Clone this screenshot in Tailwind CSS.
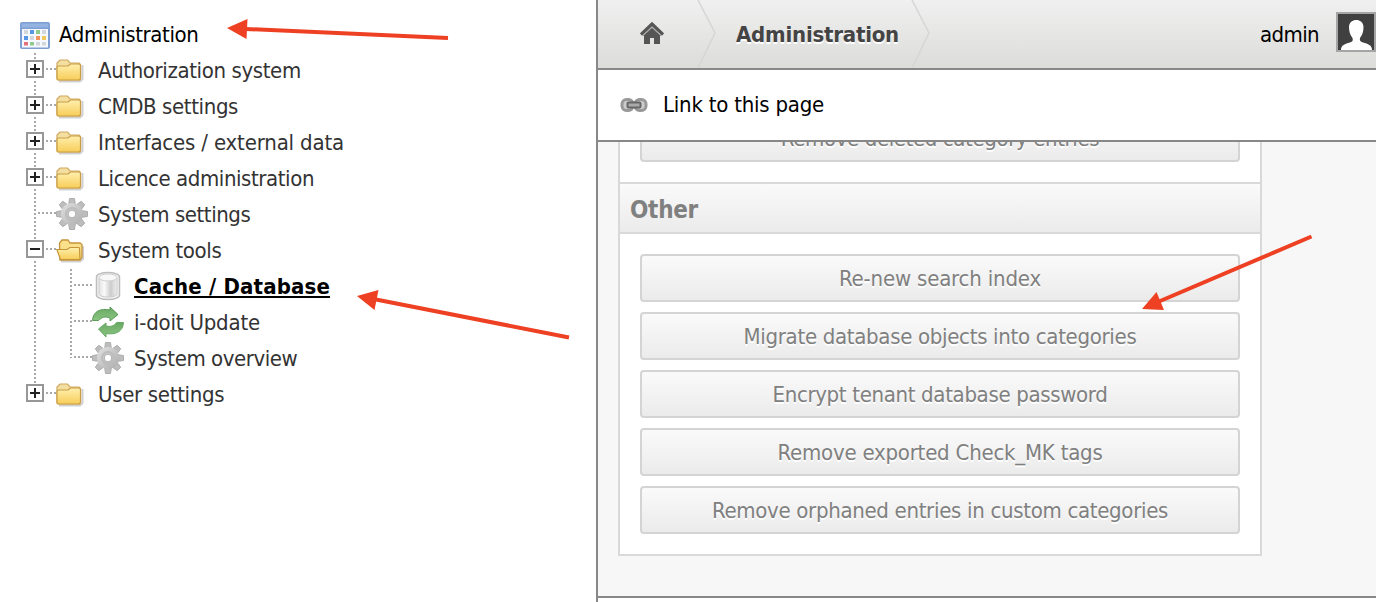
<!DOCTYPE html>
<html lang="en">
<head>
<meta charset="utf-8">
<title>Administration</title>
<script src="https://cdn.jsdelivr.net/npm/@tailwindcss/browser@4"></script>
</head>
<body class="relative flex h-[602px] w-[1376px] overflow-hidden bg-white font-['DejaVu_Sans_Condensed','DejaVu_Sans',sans-serif] text-[22px] leading-[38px] tracking-[-0.38px] whitespace-nowrap text-[#333]">

<svg class="absolute h-0 w-0">
  <defs>
    <linearGradient id="gold" x1="0" y1="0" x2="0" y2="1"><stop offset="0" stop-color="#fff0ae"/><stop offset="1" stop-color="#f7cd58"/></linearGradient>
    <linearGradient id="silver" x1="0" y1="0" x2="1" y2="1"><stop offset="0" stop-color="#e2e2e2"/><stop offset="1" stop-color="#acacac"/></linearGradient>
    <linearGradient id="drum" x1="0" y1="0" x2="1" y2="0"><stop offset="0" stop-color="#e2e2e2"/><stop offset=".3" stop-color="#fafafa"/><stop offset=".65" stop-color="#cccccc"/><stop offset="1" stop-color="#eeeeee"/></linearGradient>
    <linearGradient id="green" x1="0" y1="0" x2="0" y2="1"><stop offset="0" stop-color="#68a863"/><stop offset="1" stop-color="#8cc683"/></linearGradient>
    <symbol id="trunk" viewBox="0 0 38 36"><path d="M17 1V36" stroke="#a9a9a9" stroke-width="2" stroke-dasharray="2 2"/></symbol>
    <symbol id="box" viewBox="0 0 38 36">
      <path d="M28 17H38" stroke="#a9a9a9" stroke-width="2" stroke-dasharray="2 2"/>
      <rect x="7" y="7" width="20" height="21" fill="#fff"/>
      <rect x="9" y="9" width="16" height="16" fill="#fff" stroke="#979797" stroke-width="2"/>
      <path d="M12 17H22" stroke="#222" stroke-width="2"/>
    </symbol>
    <symbol id="plus" viewBox="0 0 38 36"><use href="#trunk"/><use href="#box"/><path d="M17 12V22" stroke="#222" stroke-width="2"/></symbol>
    <symbol id="plus-last" viewBox="0 0 38 36"><path d="M17 1V8" stroke="#a9a9a9" stroke-width="2" stroke-dasharray="2 2"/><use href="#box"/><path d="M17 12V22" stroke="#222" stroke-width="2"/></symbol>
    <symbol id="minus" viewBox="0 0 38 36"><use href="#trunk"/><use href="#box"/></symbol>
    <symbol id="leaf" viewBox="0 0 38 36"><use href="#trunk"/><path d="M20 17H38" stroke="#a9a9a9" stroke-width="2" stroke-dasharray="2 2"/></symbol>
    <symbol id="leaf-last" viewBox="0 0 38 36"><path d="M17 1V18M20 17H38" stroke="#a9a9a9" stroke-width="2" stroke-dasharray="2 2"/></symbol>
    <symbol id="folder" viewBox="0 0 32 36">
      <path d="M3 29.500H24L26.500 27V13" fill="none" stroke="#777" stroke-opacity=".35" stroke-width="2"/>
      <path d="M1 27V11L4 8H11.500L14 11H23L24.500 12.500V26L23 28H2Z" fill="#f3dfa0" stroke="#cfa862" stroke-width="1.200"/>
      <path d="M1 15.500Q1 14 2.500 14H12L14.500 12H22.500Q24.500 12 24.500 13.500V26Q24.500 28 22.500 28H2.500Q1 28 1 26Z" fill="url(#gold)" stroke="#c89d45" stroke-width="1.200"/>
    </symbol>
    <symbol id="folder-open" viewBox="0 0 32 36">
      <path d="M5 29.500H24L27 27V14" fill="none" stroke="#777" stroke-opacity=".35" stroke-width="2"/>
      <path d="M4 27L3.500 11L6 8H12L14 11H24L26 12.500V25L24 28H4Z" fill="#fbe08c" stroke="#c5943a" stroke-width="1.300"/>
      <path d="M.8 17.500H11L14 15.500H23L23.500 16.500L24 27.500H4.500Z" fill="url(#gold)" stroke="#c5943a" stroke-width="1.200"/>
    </symbol>
    <symbol id="gear" viewBox="0 0 32 36">
      <g transform="translate(16 18)">
        <g fill="#bdbdbd" stroke="#a3a3a3" stroke-width=".8">
          <path id="tooth" d="M-3.500 -9L-2.500 -15.500H2.500L3.500 -9ZM-3.500 9L-2.500 15.500H2.500L3.500 9Z"/>
          <use href="#tooth" transform="rotate(45)"/><use href="#tooth" transform="rotate(90)"/><use href="#tooth" transform="rotate(135)"/>
        </g>
        <circle r="11" fill="url(#silver)"/>
        <circle r="6" fill="none" stroke="#bcbcbc" stroke-width="2"/>
        <circle r="3.800" fill="#fff" stroke="#b0b0b0" stroke-width="1"/>
      </g>
    </symbol>
    <symbol id="database" viewBox="0 0 32 36">
      <path d="M4.500 9C4.500 3 27.500 3 27.500 9V27C27.500 33 4.500 33 4.500 27Z" fill="#f3f3f3" stroke="#bdbdbd" stroke-width="1.500"/>
      <path d="M7 10V26C7 30 25 30 25 26V10Z" fill="url(#drum)" stroke="#cdcdcd"/>
      <ellipse cx="16" cy="9.500" rx="9" ry="3.500" fill="#f8f8f8" stroke="#cfcfcf"/>
    </symbol>
    <symbol id="refresh" viewBox="0 0 32 36">
      <path d="M.5 16.500C1 7 9 4 18 6V3L26 10.500L18 17V14C13 12 10 13 6.500 16.500Z" fill="url(#green)" stroke="#589a56" stroke-width="1"/>
      <path d="M31.500 18.500C31 28 23 31 14 29.500V33L6.500 25L14 19V22C19 23 22 22 24.500 18.500Z" fill="url(#green)" stroke="#68a965" stroke-width="1"/>
    </symbol>
  </defs>
</svg>

<nav class="flex w-[596px] flex-col pt-4 pl-[18px]">
  <div class="flex h-9 text-black">
    <svg class="mr-[9px] h-9 w-8" viewBox="0 0 32 36">
      <rect x="2" y="6" width="30" height="27" rx="2" fill="#7f9fd2"/>
      <rect x="3.500" y="7.500" width="27" height="4" rx="1" fill="#94b2e2"/>
      <rect x="4" y="13" width="26" height="18.500" fill="#f5f9ff"/>
      <path d="M6 14h4v4h-4zM24 14h4v4h-4zM18 26h4v3.500h-4zM24 26h4v3.500h-4zM12 20h4v4h-4z" fill="#d3d6da"/>
      <path d="M12 14h4v4h-4zM6 20h4v4h-4z" fill="#5795e5"/>
      <path d="M18 14h4v4h-4zM12 26h4v3.500h-4z" fill="#8fca8c"/>
      <path d="M18 20h4v4h-4z" fill="#f2935c"/>
      <path d="M24 20h4v4h-4z" fill="#f0c95c"/>
      <path d="M6 26h4v3.500h-4z" fill="#e2717a"/>
    </svg>
    <span>Administration</span>
  </div>
  <div class="flex h-9"><svg class="h-9 w-[38px]"><use href="#plus"/></svg><svg class="mr-2.5 h-9 w-8"><use href="#folder"/></svg><span>Authorization system</span></div>
  <div class="flex h-9"><svg class="h-9 w-[38px]"><use href="#plus"/></svg><svg class="mr-2.5 h-9 w-8"><use href="#folder"/></svg><span>CMDB settings</span></div>
  <div class="flex h-9"><svg class="h-9 w-[38px]"><use href="#plus"/></svg><svg class="mr-2.5 h-9 w-8"><use href="#folder"/></svg><span class="tracking-[-0.17px]">Interfaces / external data</span></div>
  <div class="flex h-9"><svg class="h-9 w-[38px]"><use href="#plus"/></svg><svg class="mr-2.5 h-9 w-8"><use href="#folder"/></svg><span class="tracking-[-0.42px]">Licence administration</span></div>
  <div class="flex h-9"><svg class="h-9 w-[38px]"><use href="#leaf"/></svg><svg class="mr-2.5 h-9 w-8"><use href="#gear"/></svg><span class="tracking-[-0.45px]">System settings</span></div>
  <div class="flex h-9"><svg class="h-9 w-[38px]"><use href="#minus"/></svg><svg class="mr-2.5 h-9 w-8"><use href="#folder-open"/></svg><span>System tools</span></div>
  <div class="flex h-9"><svg class="h-9 w-9"><use href="#trunk" width="38" height="36"/></svg><svg class="h-9 w-[38px]"><use href="#leaf"/></svg><svg class="mr-2.5 h-9 w-8"><use href="#database"/></svg><span class="font-bold tracking-[0.16px] text-black underline decoration-2 underline-offset-2">Cache / Database</span></div>
  <div class="flex h-9"><svg class="h-9 w-9"><use href="#trunk" width="38" height="36"/></svg><svg class="h-9 w-[38px]"><use href="#leaf"/></svg><svg class="mr-2.5 h-9 w-8"><use href="#refresh"/></svg><span class="tracking-[-0.2px]">i-doit Update</span></div>
  <div class="flex h-9"><svg class="h-9 w-9"><use href="#trunk" width="38" height="36"/></svg><svg class="h-9 w-[38px]"><use href="#leaf-last"/></svg><svg class="mr-2.5 h-9 w-8"><use href="#gear"/></svg><span class="tracking-[-0.43px]">System overview</span></div>
  <div class="flex h-9"><svg class="h-9 w-[38px]"><use href="#plus-last"/></svg><svg class="mr-2.5 h-9 w-8"><use href="#folder"/></svg><span class="tracking-[-0.31px]">User settings</span></div>
</nav>

<main class="flex w-[780px] flex-col border-l-2 border-[#888]">
  <header class="flex h-[70px] shrink-0 items-center border-b-2 border-[#888] bg-linear-to-b from-[#f0f0f0] to-[#dcdcda]">
    <svg class="ml-[42px] h-6 w-6" viewBox="0 0 24 24">
      <path d="M4 13L12 5.500L20 13V22H14V16H10V22H4Z" fill="#555"/>
      <path d="M1 12.500L12 2L23 12.500" fill="none" stroke="#555" stroke-width="3.200"/>
      <path d="M3 14L12 5.500L21 14" fill="none" stroke="#999" stroke-width="1"/>
    </svg>
    <svg class="ml-[33px] h-[68px] w-5" viewBox="0 0 20 68"><path d="M1 0L18 33L1 68" fill="none" stroke="#d6d6d6" stroke-width="1.500"/></svg>
    <span class="ml-[19px] w-[163px] pt-0.5 font-bold tracking-[-0.22px] text-[#444] [text-shadow:0_2px_0_#fff]">Administration</span>
    <svg class="ml-[12px] h-[68px] w-5" viewBox="0 0 20 68"><path d="M1 0L18 33L1 68" fill="none" stroke="#d6d6d6" stroke-width="1.500"/></svg>
    <span class="ml-auto pt-0.5 tracking-[-0.61px] text-black">admin</span>
    <svg class="mt-3 ml-[17px] h-10 w-10 self-start" viewBox="0 0 40 40">
      <rect x="1" y="1" width="38" height="38" fill="#404040" stroke="#a5a5a5" stroke-width="2"/>
      <path d="M5 38C5 33 9 32 14 30.500C17 29.500 17 28 16.500 26C14 23 13 19 13 15C13 5.500 27.500 5.500 27.500 15C27.500 19 26.500 23 24 26C23.500 28 24 29.500 27 30.500C32 32 36 33 36 38Z" fill="#fff"/>
    </svg>
  </header>
  <div class="flex h-[72px] shrink-0 items-center border-b-2 border-[#888] bg-white text-black">
    <svg class="ml-[22px] h-4 w-7" viewBox="0 0 28 16">
      <rect x="2" y="2.500" width="11" height="11" rx="4.500" fill="#ccc" stroke="#999" stroke-width="3"/>
      <rect x="15" y="2.500" width="11" height="11" rx="4.500" fill="#ccc" stroke="#999" stroke-width="3"/>
      <rect x="7.500" y="5.500" width="13" height="5" rx="1" fill="#aaa" stroke="#666" stroke-width="2"/>
    </svg>
    <span class="ml-[15px] tracking-[-0.22px]">Link to this page</span>
  </div>
  <div class="flex h-[456px] shrink-0 flex-col overflow-hidden border-b-2 border-[#888] bg-[#f7f7f7] pl-5 tracking-[-0.31px] text-[#808080]">
    <section class="-mt-12 flex w-[644px] shrink-0 flex-col border-2 border-[#d9d9d9] bg-white">
      <div class="p-5 pt-[18px]">
        <button class="flex h-12 w-full items-center justify-center rounded border-2 border-[#d4d4d4] bg-linear-to-b from-[#fafafa] to-[#ebebeb] pt-0.5 [text-shadow:0_2px_0_#fff]"><span class="tracking-[-0.38px]">Remove deleted category entries</span></button>
      </div>
      <h2 class="flex h-[52px] items-center border-y-2 border-[#d9d9d9] bg-linear-to-b from-[#fafafa] to-[#ebebeb] pt-[3px] pl-2.5 text-2xl font-bold tracking-[-0.27px]">Other</h2>
      <div class="flex flex-col gap-2.5 p-5">
        <button class="flex h-12 items-center justify-center rounded border-2 border-[#d4d4d4] bg-linear-to-b from-[#fafafa] to-[#ebebeb] pt-0.5 [text-shadow:0_2px_0_#fff]"><span class="tracking-[-0.18px]">Re-new search index</span></button>
        <button class="flex h-12 items-center justify-center rounded border-2 border-[#d4d4d4] bg-linear-to-b from-[#fafafa] to-[#ebebeb] pt-0.5 [text-shadow:0_2px_0_#fff]"><span class="tracking-[-0.31px]">Migrate database objects into categories</span></button>
        <button class="flex h-12 items-center justify-center rounded border-2 border-[#d4d4d4] bg-linear-to-b from-[#fafafa] to-[#ebebeb] pt-0.5 [text-shadow:0_2px_0_#fff]"><span class="tracking-[-0.33px]">Encrypt tenant database password</span></button>
        <button class="flex h-12 items-center justify-center rounded border-2 border-[#d4d4d4] bg-linear-to-b from-[#fafafa] to-[#ebebeb] pt-0.5 [text-shadow:0_2px_0_#fff]"><span class="tracking-[-0.22px]">Remove exported Check_MK tags</span></button>
        <button class="flex h-12 items-center justify-center rounded border-2 border-[#d4d4d4] bg-linear-to-b from-[#fafafa] to-[#ebebeb] pt-0.5 [text-shadow:0_2px_0_#fff]"><span class="tracking-[-0.31px]">Remove orphaned entries in custom categories</span></button>
      </div>
    </section>
  </div>
</main>

<svg class="pointer-events-none absolute inset-0 h-[602px] w-[1376px]" viewBox="0 0 1376 602" fill="#ee4023" stroke="#ee4023">
  <path d="M246 29L448 38M376 299.500L569 337.500M1159 301.500L1311.500 236.500" stroke-width="4"/>
  <path d="M227 28L247.500 19L246.500 39ZM357 296L378.500 290L374.500 310ZM1142 309L1156.500 292L1164 310Z" stroke="none"/>
</svg>
</body>
</html>
